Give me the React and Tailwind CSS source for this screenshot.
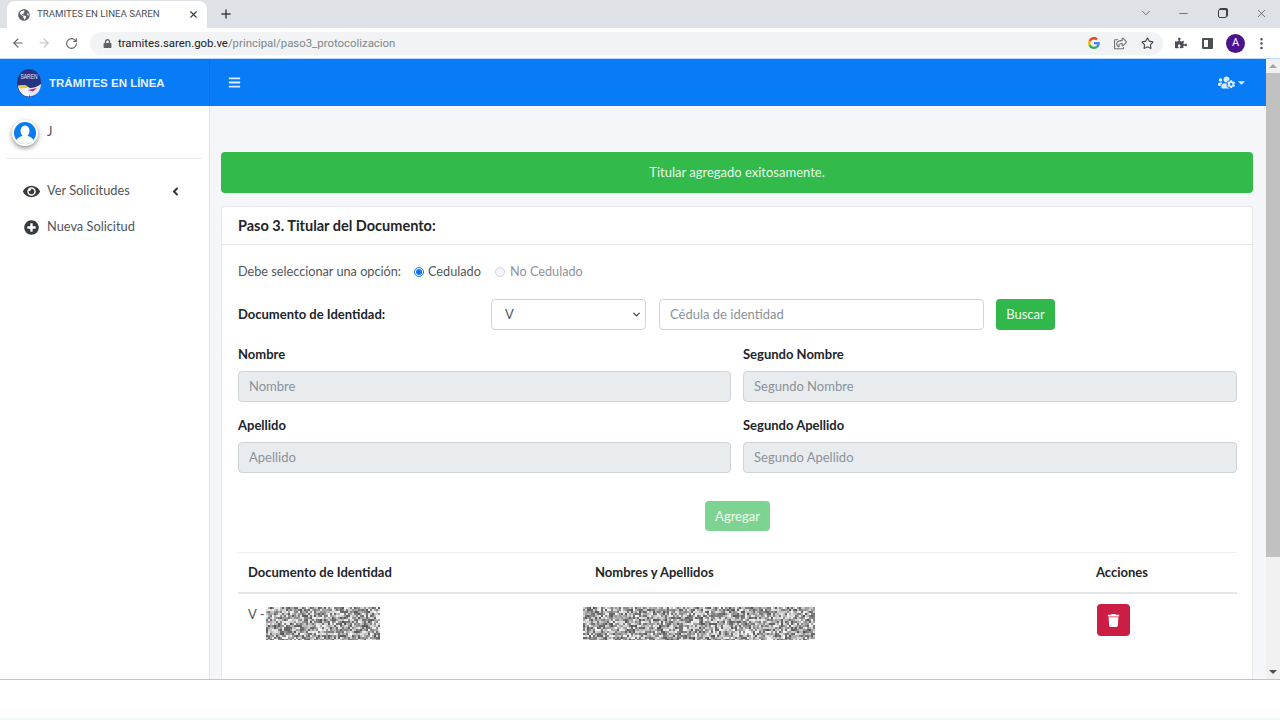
import { ArrowLeft, ArrowRight, RotateCw, Minus, X, Plus, ChevronDown, Star, MoreVertical } from 'lucide-react'
import { FaBars, FaEye, FaPlusCircle, FaAngleLeft, FaTrash, FaUsersCog, FaCaretDown, FaLock, FaPuzzlePiece, FaGlobeAmericas, FaRegShareSquare } from 'react-icons/fa'

// grey static used to hide the personal data in the table
function Noise({ width, height, seed }) {
  const cells = []
  let n = seed
  for (let y = 0; y < height; y += 2) {
    for (let x = 0; x < width; x += 2) {
      n = (n * 16807) % 2147483647
      const v = 85 + (n % 165)
      cells.push(<rect key={x + '-' + y} x={x} y={y} width="2" height="2" fill={`rgb(${v},${v},${v})`} />)
    }
  }
  return (
    <div className="shrink-0 overflow-hidden">
      <svg width={width} height={height} className="block blur-[0.7px]">
        {cells}
      </svg>
    </div>
  )
}

function GoogleG() {
  return (
    <svg width="12" height="12" viewBox="0 0 48 48">
      <path fill="#EA4335" d="M24 9.5c3.5 0 6.7 1.3 9.1 3.5l6.8-6.8C35.800 2.400 30.200 0 24 0 14.600 0 6.500 5.400 2.600 13.200l7.900 6.200C12.400 13.600 17.700 9.500 24 9.500z" />
      <path fill="#4285F4" d="M46.900 24.500c0-1.600-.1-3.100-.4-4.500H24v9h12.900c-.6 3-2.200 5.500-4.800 7.200l7.700 6c4.500-4.200 7.100-10.300 7.100-17.700z" />
      <path fill="#FBBC05" d="M10.500 28.600c-.5-1.400-.8-3-.8-4.600s.3-3.200.8-4.600l-7.900-6.200C.9 16.500 0 20.100 0 24s.9 7.500 2.600 10.800l7.900-6.200z" />
      <path fill="#34A853" d="M24 48c6.500 0 11.900-2.100 15.900-5.800l-7.700-6c-2.200 1.400-4.900 2.300-8.200 2.300-6.300 0-11.600-4.200-13.500-9.900l-7.900 6.200C6.500 42.600 14.600 48 24 48z" />
    </svg>
  )
}

function SarenLogo() {
  return (
    <svg width="26" height="30" viewBox="0 0 26 30" className="shrink-0">
      <ellipse cx="13" cy="15" rx="12" ry="14" fill="#26337f" />
      <text transform="translate(13 11) scale(0.62 1)" textAnchor="middle" fontSize="8" fill="#e8ecff" fontFamily="Liberation Sans, sans-serif">SAREN</text>
      <path d="M2 18 C8 15.500 12 19 16 21 L13 28.500 C7 28.500 3 24 2 18z" fill="#f1f3fb" />
      <path d="M2 17.500 L10 17 L11.500 20 L4 20.500z" fill="#e6c63a" />
      <path d="M11 20 C16 20 20 20 25 16 C25 23 20 28 14 28.500z" fill="#dfe6f8" />
      <path d="M12 22 L21 20 L17 23.500z" fill="#c8323c" />
    </svg>
  )
}

function BrowserChrome() {
  return (
    <div className="shrink-0 bg-white font-['Roboto',sans-serif]">
      <div className="flex h-7 items-end bg-[#dee1e6] pl-[7px]">
        <div className="flex h-[27px] w-[200px] items-center rounded-t-lg bg-white pl-[11px] pr-[8px]">
          <FaGlobeAmericas className="size-[12px] text-[#5f6368]" />
          <span className="ml-[7px] flex-1 text-[9.7px] text-[#4d4f53]">TRAMITES EN LINEA SAREN</span>
          <X className="size-[11px] text-[#3c4043]" strokeWidth={2.5} />
        </div>
        <Plus className="mb-[7px] ml-[12px] size-[14px] text-[#3c4043]" strokeWidth={2.5} />
        <div className="mb-[8px] ml-auto flex items-center text-[#3c4043]">
          <ChevronDown className="mr-[24px] size-[14px]" strokeWidth={1.25} />
          <Minus className="mr-[28px] size-[13px]" strokeWidth={1.25} />
          <div className="mr-[28px] size-[9px] rounded-[2px] border border-[#3c4043] bg-[#dee1e6] shadow-[1px_-1px_0_#3c4043]" />
          <X className="mr-[12px] size-[13px]" strokeWidth={1.25} />
        </div>
      </div>
      <div className="flex h-[30px] items-center pl-[11px] pr-[11px] text-[#5f6368]">
        <ArrowLeft className="size-[14px]" />
        <ArrowRight className="ml-[12px] size-[14px] text-[#c3c6ca]" />
        <RotateCw className="ml-[14px] size-[13px]" />
        <div className="ml-[12px] flex h-[23px] w-[1073px] items-center rounded-full bg-[#f1f3f4] pl-[13px] pr-[9px]">
          <FaLock className="size-[9px]" />
          <span className="ml-[6px] mt-[2px] flex-1 text-[11.4px] text-[#80868b]">
            <span className="text-[#202124]">tramites.saren.gob.ve</span>/principal/paso3_protocolizacion
          </span>
          <GoogleG />
          <FaRegShareSquare className="ml-[14px] size-[13px] text-[#6f7378]" />
          <Star className="ml-[14px] size-[13px] text-[#3c4043]" />
        </div>
        <FaPuzzlePiece className="ml-[12px] size-[12px] text-[#4b4e52]" />
        <div className="ml-[15px] flex h-[11px] w-[11px] justify-end rounded-[1px] border-2 border-[#4b4e52]">
          <div className="h-full w-[3px] bg-[#4b4e52]" />
        </div>
        <div className="ml-[13px] flex size-[19px] items-center justify-center rounded-full bg-[#4a148c] text-[11px] text-white">A</div>
        <MoreVertical className="ml-[9px] size-[15px] text-[#4b4e52]" />
      </div>
      <div className="h-px bg-[#b7dcfb]" />
    </div>
  )
}

function Navbar() {
  return (
    <div className="flex h-[47px] shrink-0 items-center bg-[#087cf7] text-white">
      <div className="flex h-full w-[210px] items-center border-r border-[#0a6fdc] pl-[16px]">
        <SarenLogo />
        <span className="ml-[7px] mt-[2px] font-['Liberation_Sans',sans-serif] text-[11.5px] font-bold text-[#e6f2ff]">TRÁMITES EN LÍNEA</span>
      </div>
      <FaBars className="ml-[18px] size-[13px] text-[#dcecff]" />
      <div className="ml-auto mr-[19px] flex items-center text-[#dcecff]">
        <FaUsersCog className="size-[17px]" />
        <FaCaretDown className="ml-px size-[11px]" />
      </div>
    </div>
  )
}

function Avatar() {
  return (
    <svg width="26" height="26" viewBox="0 0 26 26" className="shrink-0 rounded-full shadow-[0_2px_5px_rgba(0,0,0,0.45)]">
      <circle cx="13" cy="13" r="13" fill="#fff" />
      <circle cx="13" cy="13" r="11" fill="#0a7cf0" />
      <ellipse cx="13" cy="11" rx="4.500" ry="5.500" fill="#fff" />
      <path d="M4.500 20 C6 17 9.500 16.500 11 15.500 L15 15.500 C16.500 16.500 20 17 21.500 20 C19.500 22.800 16.500 24 13 24 C9.500 24 6.500 22.800 4.500 20z" fill="#fff" />
    </svg>
  )
}

function Sidebar() {
  return (
    <aside className="w-[210px] shrink-0 border-r border-[#dee2e6] bg-white pl-[6px] pr-[7px]">
      <div className="flex h-[53px] items-start border-b border-[#e6e8eb] pl-[6px] pt-[14px]">
        <Avatar />
        <span className="ml-[9px] mt-[2px] text-[13px] text-[#4f565c]">J</span>
      </div>
      <div className="mt-[22px] flex h-[20px] items-center pl-[17px] text-[12.8px] text-[#4f565c]">
        <FaEye className="size-[17px] text-[#343a40]" />
        <span className="ml-[7px] w-[122px]">Ver Solicitudes</span>
        <FaAngleLeft className="size-[13px] text-[#343a40]" />
      </div>
      <div className="mt-[16px] flex h-[20px] items-center pl-[18px] text-[12.8px] text-[#4f565c]">
        <FaPlusCircle className="size-[15px] text-[#343a40]" />
        <span className="ml-[8px]">Nueva Solicitud</span>
      </div>
    </aside>
  )
}

function Field({ label, placeholder }) {
  return (
    <div>
      <div className="h-[17px] text-[13px] font-bold leading-[17px] text-[#212529]">{label}</div>
      <div className="mt-[8px] flex h-[31px] items-center rounded border border-[#ced4da] bg-[#e9ecef] px-[10px] text-[13px] text-[#8a9299]">{placeholder}</div>
    </div>
  )
}

function MainCard() {
  return (
    <div className="mt-[13px] flex-1 rounded-t border border-b-0 border-[#e7e9ec] bg-white">
      <div className="flex h-[38px] items-center border-b border-[#e4e6e9] pl-[16px] text-[14.5px] font-bold text-[#212529]">
        Paso 3. Titular del Documento:
      </div>
      <div className="pl-[16px] pr-[15px]">
        <div className="mt-[18px] flex h-[18px] items-center text-[12.7px] text-[#4f565c]">
          <span className="w-[176px]">Debe seleccionar una opción:</span>
          <span className="flex size-[10px] items-center justify-center rounded-full border border-[#0a75f0] bg-white">
            <span className="size-[6px] rounded-full bg-[#0a75f0]" />
          </span>
          <span className="ml-[4px] w-[67px]">Cedulado</span>
          <span className="size-[10px] rounded-full border border-[#d3d6d9] bg-[#f4f5f6]" />
          <span className="ml-[5px] text-[#8d949a]">No Cedulado</span>
        </div>
        <div className="mt-[18px] flex h-[31px] items-center">
          <span className="w-[253px] text-[13px] font-bold text-[#212529]">Documento de Identidad:</span>
          <div className="flex h-full w-[155px] items-center rounded border border-[#ced4da] pl-[13px] pr-[3px] text-[13px] text-[#4f565c]">
            <span className="flex-1">V</span>
            <ChevronDown className="size-[11px] text-[#343a40]" strokeWidth={2.5} />
          </div>
          <div className="ml-[13px] flex h-full w-[325px] items-center rounded border border-[#ced4da] px-[10px] text-[13px] text-[#8a9299]">Cédula de identidad</div>
          <div className="ml-[12px] flex h-full w-[59px] items-center justify-center rounded bg-[#30b94a] text-[13px] text-[#eefbf0]">Buscar</div>
        </div>
        <div className="mt-[16px] grid grid-cols-[493px_1fr] gap-[12px]">
          <Field label="Nombre" placeholder="Nombre" />
          <Field label="Segundo Nombre" placeholder="Segundo Nombre" />
        </div>
        <div className="mt-[15px] grid grid-cols-[493px_1fr] gap-[12px]">
          <Field label="Apellido" placeholder="Apellido" />
          <Field label="Segundo Apellido" placeholder="Segundo Apellido" />
        </div>
        <div className="mt-[28px] flex justify-center">
          <div className="flex h-[30px] w-[65px] items-center justify-center rounded bg-[#7dd492] pt-px text-[13px] text-[#f0fbf2]">Agregar</div>
        </div>
        <div className="mt-[21px] grid grid-cols-[347px_501px_1fr] border-t border-[#eceef0] text-[13px]">
          <div className="flex h-[41px] items-center border-b-2 border-[#e4e6e9] pl-[10px] font-bold text-[#212529]">Documento de Identidad</div>
          <div className="flex h-[41px] items-center border-b-2 border-[#e4e6e9] pl-[10px] font-bold text-[#212529]">Nombres y Apellidos</div>
          <div className="flex h-[41px] items-center border-b-2 border-[#e4e6e9] pl-[10px] font-bold text-[#212529]">Acciones</div>
          <div className="flex items-start pl-[10px] pt-[13px] text-[#4f565c]">
            <span className="w-[18px] leading-[14px]">V -</span>
            <Noise width={114} height={33} seed={1234} />
          </div>
          <div className="-ml-[2px] flex pt-[13px]">
            <Noise width={232} height={33} seed={98765} />
          </div>
          <div className="pl-[11px] pt-[10px]">
            <div className="flex h-[32px] w-[33px] items-center justify-center rounded bg-[#cc1d44]">
              <FaTrash className="size-[13px] text-white" />
            </div>
          </div>
        </div>
      </div>
    </div>
  )
}

function Scrollbar() {
  return (
    <div className="flex w-[14px] shrink-0 flex-col bg-[#f1f1f1]">
      <div className="flex h-[14px] items-center justify-center">
        <div className="border-x-[4px] border-b-[4px] border-x-transparent border-b-[#a3a3a3]" />
      </div>
      <div className="h-[484px] bg-[#c1c1c1]" />
      <div className="mt-auto flex h-[14px] items-center justify-center">
        <div className="border-x-[4px] border-t-[4px] border-x-transparent border-t-[#505050]" />
      </div>
    </div>
  )
}

export default function App() {
  return (
    <div className="flex h-[720px] w-[1280px] flex-col overflow-hidden bg-white font-['Lato',sans-serif]">
      <BrowserChrome />
      <div className="flex h-[620px] shrink-0">
        <div className="flex w-[1266px] shrink-0 flex-col">
          <Navbar />
          <div className="flex min-h-0 flex-1">
            <Sidebar />
            <main className="flex flex-1 flex-col bg-[#f4f6f9] pl-[11px] pr-[13px] pt-[46px]">
              <div className="flex h-[41px] shrink-0 items-center justify-center rounded bg-[#32ba4b] pt-px text-[13px] text-[#e9f9ec]">
                Titular agregado exitosamente.
              </div>
              <MainCard />
            </main>
          </div>
        </div>
        <Scrollbar />
      </div>
      <div className="h-px shrink-0 bg-[#c4c4c4]" />
      <div className="flex-1 bg-white" />
      <div className="h-[2px] shrink-0 bg-[#eefaf0]" />
    </div>
  )
}
